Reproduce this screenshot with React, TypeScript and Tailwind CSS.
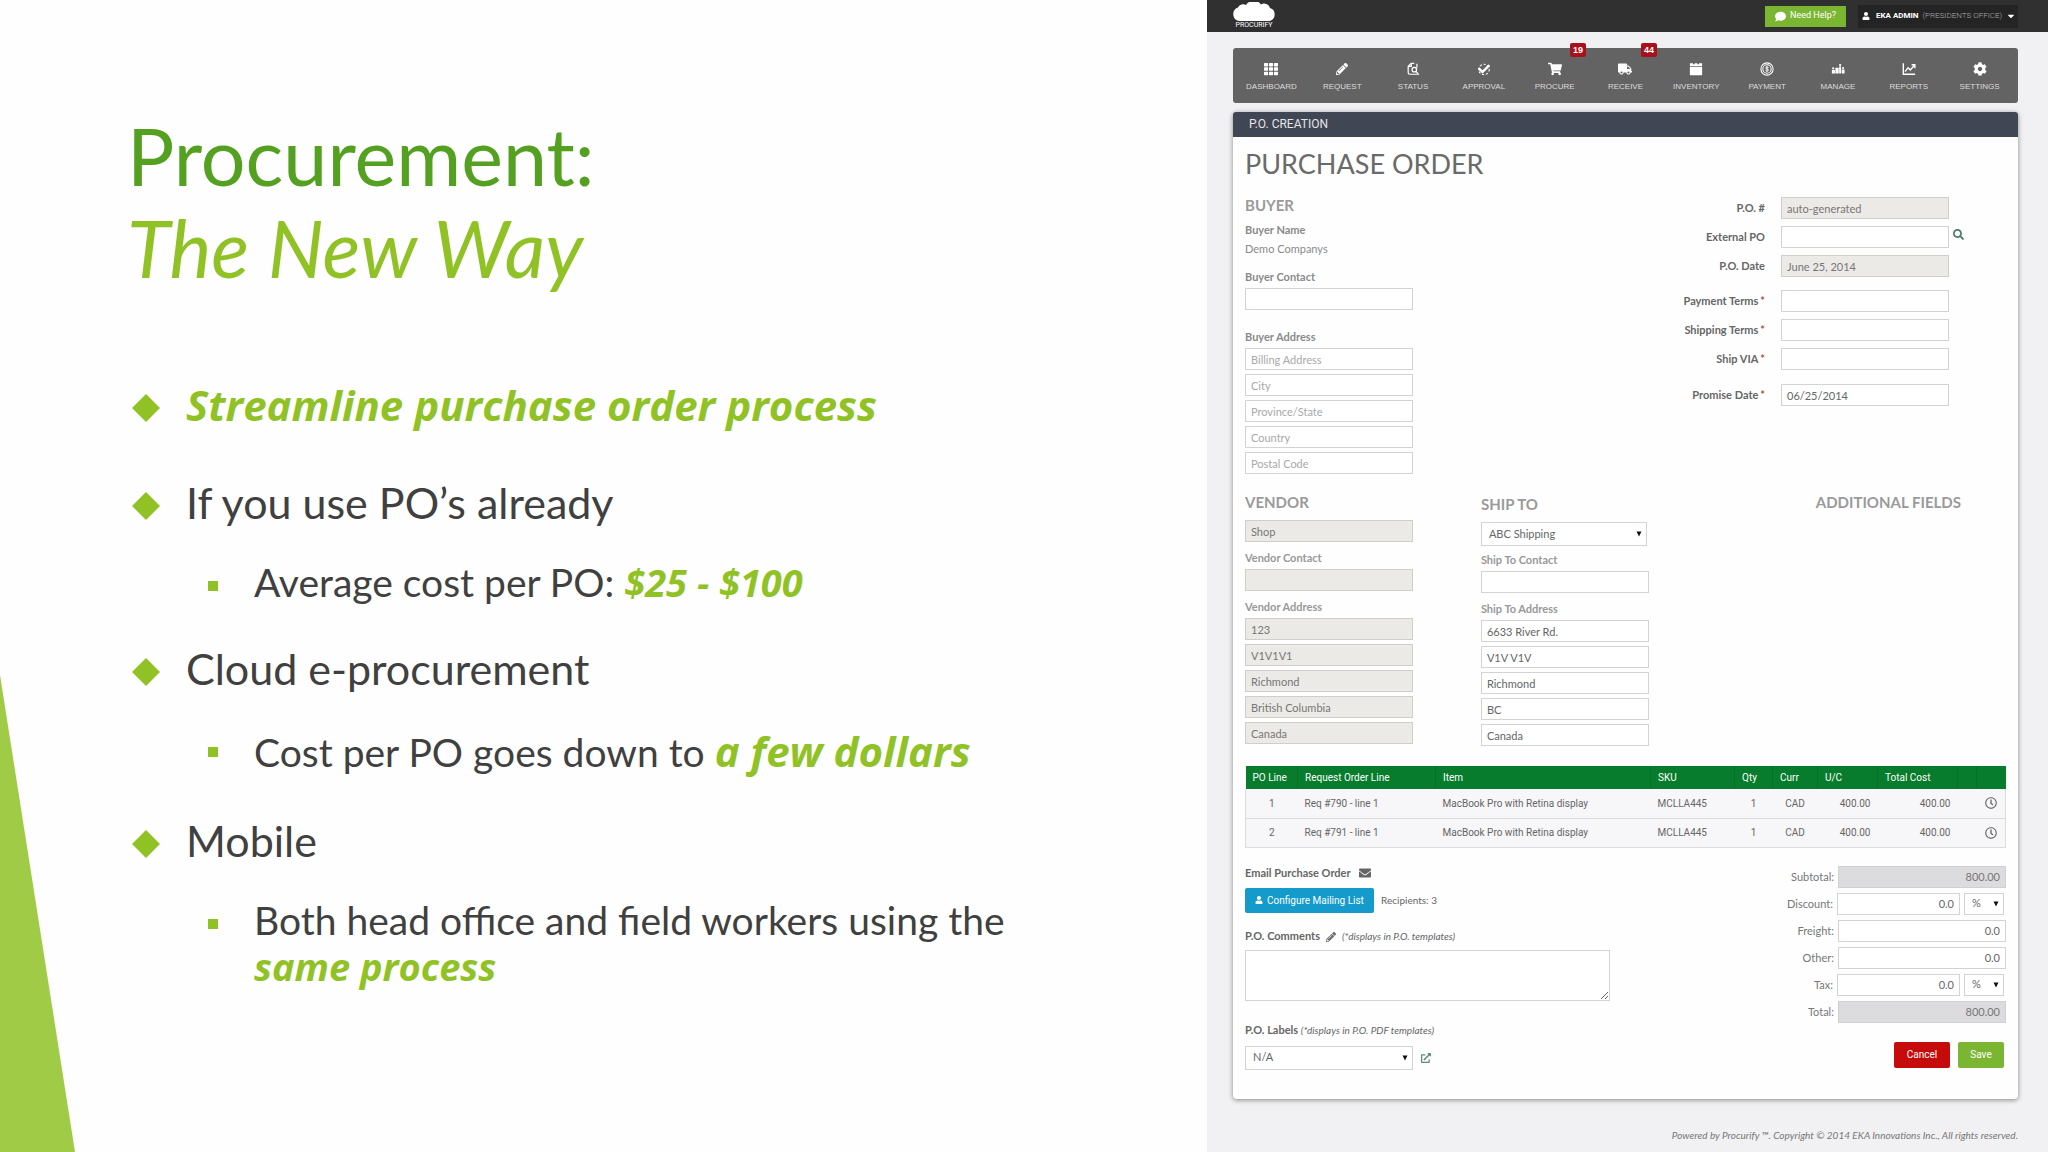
import React from 'react';
import {
  FaCheck,
  FaCog,
  FaComment,
  FaEnvelope,
  FaPencilAlt,
  FaSearch,
  FaShoppingCart,
  FaTh,
  FaTruck,
  FaUser,
  FaCaretDown,
  FaRegClock,
  FaExternalLinkAlt,
} from 'react-icons/fa';

const StatusIcon = () => (
  <svg viewBox="0 0 16 16" className="w-3.5 h-3.5" fill="none" stroke="currentColor" strokeWidth="1.4">
    <path d="M9.500 1.500H6L2.500 5v7a2 2 0 0 0 2 2H15" />
    <path d="M6 1.500V5H2.500M12.500 2v4.500" />
    <circle cx="9.500" cy="8.800" r="2.600" />
    <path d="M11.500 11l2.500 2.500" />
  </svg>
);

const ApprovalIcon = () => (
  <span className="relative flex w-3.5 h-3.5 items-center justify-center">
    <svg viewBox="0 0 16 16" className="absolute inset-0" fill="none" stroke="currentColor" strokeWidth="1.2">
      <circle cx="8" cy="8.5" r="6" strokeDasharray="2.5 2" />
    </svg>
    <FaCheck className="w-3 h-3" />
  </span>
);

const BoxIcon = () => (
  <svg viewBox="0 0 16 16" className="w-3.5 h-3.5" fill="currentColor">
    <path d="M1 1.500h3.500v1.200h2V1.500h3v1.200h2V1.500H15v3H1zM1 5.500h14V15H1z" />
  </svg>
);

const CoinIcon = () => (
  <svg viewBox="0 0 16 16" className="w-3.5 h-3.5" fill="none" stroke="currentColor">
    <circle cx="8" cy="8" r="7" strokeWidth="1.2" />
    <circle cx="8" cy="8" r="4.8" strokeWidth="1.2" />
    <path d="M9.8 6.3c-.8-.8-3.4-.8-3.4.5 0 1.4 3.4.8 3.4 2.3 0 1.3-2.6 1.4-3.6.4M8 4.5v7" strokeWidth="1" />
  </svg>
);

const ManageIcon = () => (
  <svg viewBox="0 0 16 16" className="w-3.5 h-3.5" fill="currentColor">
    <path d="M1 9h3.500v4H1zM5 6.500h3.800V13H5zM9.300 5h2.200v8H9.300zM12.300 8.500H15.500V13h-3.200z" />
    <circle cx="2.500" cy="7.300" r="1.200" />
    <circle cx="10.400" cy="3.500" r="1.300" />
    <circle cx="13.800" cy="6.800" r="1.200" />
  </svg>
);

const ReportsIcon = () => (
  <svg viewBox="0 0 16 16" className="w-3.5 h-3.5" fill="none" stroke="currentColor" strokeWidth="1.6">
    <path d="M1.500 1.500v12.500H15" />
    <path d="M3.500 11l3.500-4.500 2.500 2.500 5-5.500M11 3.200h3.700V7" />
  </svg>
);

const navItems = [
  { label: 'DASHBOARD', icon: <FaTh className="w-3.5 h-3.5" /> },
  { label: 'REQUEST', icon: <FaPencilAlt className="w-3 h-3" /> },
  { label: 'STATUS', icon: <StatusIcon /> },
  { label: 'APPROVAL', icon: <ApprovalIcon /> },
  { label: 'PROCURE', icon: <FaShoppingCart className="w-3.5 h-3.5" />, badge: '19' },
  { label: 'RECEIVE', icon: <FaTruck className="w-3.5 h-3.5" />, badge: '44' },
  { label: 'INVENTORY', icon: <BoxIcon /> },
  { label: 'PAYMENT', icon: <CoinIcon /> },
  { label: 'MANAGE', icon: <ManageIcon /> },
  { label: 'REPORTS', icon: <ReportsIcon /> },
  { label: 'SETTINGS', icon: <FaCog className="w-3.5 h-3.5" /> },
];

const inputBase = 'block h-[22px] border px-[5px] text-[11px] outline-none placeholder:text-[#a9a9a9]';
const editable = 'bg-white border-[#d4d2d6] text-[#666]';
const locked = 'bg-[#ebeae6] border-[#cfcec9] text-[#777]';

type BoxProps = { id: string; value?: string; placeholder?: string; readOnly?: boolean };

const Box: React.FC<BoxProps> = ({ id, value = '', placeholder, readOnly }) => (
  <input
    id={id}
    aria-label={placeholder || id}
    defaultValue={value}
    placeholder={placeholder}
    readOnly={readOnly}
    className={`${inputBase} w-[168px] ${readOnly ? locked : editable}`}
  />
);

const Label: React.FC<{ htmlFor?: string; className?: string; children: React.ReactNode }> = ({
  htmlFor,
  className = '',
  children,
}) => (
  <label htmlFor={htmlFor} className={`block text-[11px] leading-[18px] font-bold ${className}`}>
    {children}
  </label>
);

const Picker: React.FC<{ id: string; label?: string; options: string[]; className: string }> = ({
  id,
  label,
  options,
  className,
}) => (
  <div className={`relative ${className}`}>
    <select
      id={id}
      aria-label={label}
      className="block w-full h-full appearance-none border border-[#d4d2d6] bg-white pl-[7px] text-[11px] text-[#666] outline-none"
    >
      {options.map((o) => (
        <option key={o}>{o}</option>
      ))}
    </select>
    <svg viewBox="0 0 6 6" className="absolute right-[5px] top-1/2 -mt-[3px] w-1.5 h-1.5 pointer-events-none" fill="#111">
      <path d="M0.500 0.500h5L3 5.500z" />
    </svg>
  </div>
);

const SectionTitle: React.FC<{ children: React.ReactNode }> = ({ children }) => (
  <h2 className="text-[15px] leading-5 font-bold text-[#9a9a9a]">{children}</h2>
);

const Diamond = () => (
  <svg viewBox="0 0 28 28" className="w-7 h-7 shrink-0 mt-[15px] mr-[26px]" fill="#90c226">
    <path d="M14 0l14 14-14 14L0 14z" />
  </svg>
);

const PointText: React.FC<{ children: React.ReactNode }> = ({ children }) => (
  <div className="flex text-[43px] leading-[52px]">
    <Diamond />
    <p>{children}</p>
  </div>
);

const SubPoint: React.FC<{ children: React.ReactNode }> = ({ children }) => (
  <div className="flex mt-[30px] pl-[76px] text-[39px] leading-[46px]">
    <span className="w-2.5 h-2.5 mt-[22px] mr-9 shrink-0 bg-[#90c226]"></span>
    <p>{children}</p>
  </div>
);

const Accent: React.FC<{ large?: boolean; children: React.ReactNode }> = ({ large, children }) => (
  <strong
    className={`font-['Open_Sans',sans-serif] font-bold italic text-[#90c226] ${
      large ? 'text-[42px] leading-[52px]' : 'text-[38px] leading-[46px]'
    }`}
  >
    {children}
  </strong>
);

const Slide = () => (
  <section className="relative pl-[127px] pt-[110px] font-['Lato',sans-serif] text-[#404040]">
    <svg
      viewBox="0 0 75 477"
      preserveAspectRatio="none"
      className="absolute left-0 bottom-0 w-[75px] h-[477px]"
      fill="#a0cb46"
    >
      <path d="M0 0l75 477H0z" />
    </svg>
    <h1 className="text-[79px] leading-[92px] text-[#54a021]">
      Procurement:
      <br />
      <em className="text-[#90c226]">The New Way</em>
    </h1>
    <ul className="mt-[85px] ml-[5px]">
      <li>
        <PointText>
          <Accent large>Streamline purchase order process</Accent>
        </PointText>
      </li>
      <li className="mt-[46px]">
        <PointText>If you use PO’s already</PointText>
        <SubPoint>
          Average cost per PO: <Accent>$25 - $100</Accent>
        </SubPoint>
      </li>
      <li className="mt-[38px]">
        <PointText>Cloud e-procurement</PointText>
        <SubPoint>
          Cost per PO goes down to <Accent large>a few dollars</Accent>
        </SubPoint>
      </li>
      <li className="mt-[38px]">
        <PointText>Mobile</PointText>
        <SubPoint>
          Both head office and field workers using the
          <br />
          <Accent>same process</Accent>
        </SubPoint>
      </li>
    </ul>
  </section>
);

const TopBar = () => (
  <header className="flex h-8 items-center bg-[#303030] pl-[25px] pr-[30px] font-['Roboto',sans-serif]">
    <div className="flex flex-col items-center text-white">
      <svg viewBox="0 0 44 19" className="w-11 h-[19px]" fill="#fff">
        <path d="M7 19a7 7 0 0 1-1-13.500A6 6 0 0 1 14 3a9 9 0 0 1 15-.5 6 6 0 0 1 9 3.500A6.700 6.700 0 0 1 37 19z" />
      </svg>
      <span className="text-[7px] leading-[9px]">PROCURIFY</span>
    </div>
    <button className="ml-auto flex h-[21px] w-[81px] items-center justify-center gap-1 bg-[#7ab631] text-[9px] text-white">
      <FaComment className="w-[11px] h-[11px]" />
      Need Help?
    </button>
    <button className="ml-3 flex h-[23px] w-40 items-center gap-1 whitespace-nowrap bg-[#242424] px-1 text-[8px] font-bold text-white">
      <FaUser className="mr-0.5 w-2 h-2 shrink-0" />
      EKA ADMIN
      <span className="font-light text-[#aaa]">(PRESIDENTS OFFICE)</span>
      <FaCaretDown className="ml-auto mr-1 w-2.5 h-2.5 shrink-0" />
    </button>
  </header>
);

const NavBar = () => (
  <nav className="mt-4 grid h-[55px] grid-cols-11 rounded-[3px] bg-[#636363] px-[3px]">
    {navItems.map((item) => (
      <a
        key={item.label}
        href="#"
        className="relative flex flex-col items-center pt-3.5 font-['Liberation_Sans',sans-serif] text-[8px] leading-3 text-[#dcdcdc]"
      >
        <span className="mb-[5px] flex h-3.5 items-center text-white">{item.icon}</span>
        {item.label}
        {item.badge && (
          <span className="absolute right-1 -top-[5px] h-3.5 w-4 rounded-[2px] bg-[#a8111b] text-center text-[9px] font-bold leading-[14px] text-white">
            {item.badge}
          </span>
        )}
      </a>
    ))}
  </nav>
);

const HeaderRow: React.FC<{ label: string; id: string; required?: boolean; children: React.ReactNode }> = ({
  label,
  id,
  required,
  children,
}) => (
  <div className="flex h-[22px] items-center">
    <Label htmlFor={id} className="mr-4 flex-1 text-right text-[#666]">
      {label}
      {required && <span className="ml-0.5 text-[#b0554f]">*</span>}
    </Label>
    {children}
  </div>
);

const BuyerSection = () => (
  <div className="mt-[11px] flex justify-between">
    <div className="text-[#8a8a8a]">
      <SectionTitle>BUYER</SectionTitle>
      <Label className="mt-1.5">Buyer Name</Label>
      <p className="mt-px text-[11px] leading-[18px]">Demo Companys</p>
      <Label htmlFor="buyer-contact" className="mt-2.5 mb-0.5">Buyer Contact</Label>
      <Box id="buyer-contact" />
      <Label htmlFor="billing" className="mt-[18px] mb-0.5">Buyer Address</Label>
      <div className="flex flex-col gap-1">
        <Box id="billing" placeholder="Billing Address" />
        <Box id="buyer-city" placeholder="City" />
        <Box id="buyer-state" placeholder="Province/State" />
        <Box id="buyer-country" placeholder="Country" />
        <Box id="buyer-postal" placeholder="Postal Code" />
      </div>
    </div>
    <div className="mr-[57px] mt-0.5 flex flex-col gap-[7px]">
      <HeaderRow label="P.O. #" id="po-number">
        <Box id="po-number" value="auto-generated" readOnly />
      </HeaderRow>
      <HeaderRow label="External PO" id="external-po">
        <div className="relative">
          <Box id="external-po" />
          <button aria-label="Search" className="absolute left-[172px] top-[3px] text-[#4d7a6b]">
            <FaSearch className="w-[11px] h-[11px]" />
          </button>
        </div>
      </HeaderRow>
      <HeaderRow label="P.O. Date" id="po-date">
        <Box id="po-date" value="June 25, 2014" readOnly />
      </HeaderRow>
      <div className="mt-1.5 flex flex-col gap-[7px]">
        <HeaderRow label="Payment Terms" id="payment-terms" required>
          <Box id="payment-terms" />
        </HeaderRow>
        <HeaderRow label="Shipping Terms" id="shipping-terms" required>
          <Box id="shipping-terms" />
        </HeaderRow>
        <HeaderRow label="Ship VIA" id="ship-via" required>
          <Box id="ship-via" />
        </HeaderRow>
      </div>
      <div className="mt-[7px]">
        <HeaderRow label="Promise Date" id="promise-date" required>
          <Box id="promise-date" value="06/25/2014" />
        </HeaderRow>
      </div>
    </div>
  </div>
);

const vendorAddress = ['123', 'V1V1V1', 'Richmond', 'British Columbia', 'Canada'];
const shipAddress = ['6633 River Rd.', 'V1V V1V', 'Richmond', 'BC', 'Canada'];

const PartiesSection = () => (
  <div className="mt-[18px] grid grid-cols-[31%_44%_1fr] text-[#999]">
    <div>
      <SectionTitle>VENDOR</SectionTitle>
      <div className="mt-2">
        <Box id="vendor" value="Shop" readOnly />
      </div>
      <Label htmlFor="vendor-contact" className="mt-[7px] mb-0.5">Vendor Contact</Label>
      <Box id="vendor-contact" readOnly />
      <Label htmlFor="vendor-address-0" className="mt-[7px] mb-0.5">Vendor Address</Label>
      <div className="flex flex-col gap-1">
        {vendorAddress.map((v, i) => (
          <Box key={v} id={`vendor-address-${i}`} value={v} readOnly />
        ))}
      </div>
    </div>
    <div className="pt-0.5">
      <SectionTitle>SHIP TO</SectionTitle>
      <Picker id="ship-to" label="Ship to" options={['ABC Shipping']} className="mt-2 h-6 w-[166px]" />
      <Label htmlFor="ship-contact" className="mt-[5px] mb-0.5">Ship To Contact</Label>
      <Box id="ship-contact" />
      <Label htmlFor="ship-address-0" className="mt-[7px] mb-0.5">Ship To Address</Label>
      <div className="flex flex-col gap-1">
        {shipAddress.map((v, i) => (
          <Box key={v} id={`ship-address-${i}`} value={v} />
        ))}
      </div>
    </div>
    <SectionTitle>ADDITIONAL FIELDS</SectionTitle>
  </div>
);

const lines = [
  { no: 1, request: 'Req #790 - line 1' },
  { no: 2, request: 'Req #791 - line 1' },
];

const OrderTable = () => (
  <table className="mt-5 w-full table-fixed border-b border-[#cfcdd0] font-['Roboto',sans-serif] text-[10px] text-[#666]">
    <colgroup>
      <col className="w-[52px]" />
      <col className="w-[138px]" />
      <col />
      <col className="w-[84px]" />
      <col className="w-[38px]" />
      <col className="w-[45px]" />
      <col className="w-[60px]" />
      <col className="w-[80px]" />
      <col className="w-[19px]" />
      <col className="w-[29px]" />
    </colgroup>
    <thead>
      <tr className="h-[23px] bg-[#067c2c] text-left text-white">
        {['PO Line', 'Request Order Line', 'Item', 'SKU', 'Qty', 'Curr', 'U/C', 'Total Cost', '', ''].map((h, i) => (
          <th key={i} className="border-r border-[#05702a] px-[7px] font-normal last:border-r-0">
            {h}
          </th>
        ))}
      </tr>
    </thead>
    <tbody>
      {lines.map((line) => (
        <tr key={line.no} className="h-[29px] border-b border-x border-[#dddbde] bg-[#f7f6f8]">
          <td className="text-center">{line.no}</td>
          <td className="px-[7px]">{line.request}</td>
          <td className="px-[7px]">MacBook Pro with Retina display</td>
          <td className="px-[7px]">MCLLA445</td>
          <td className="text-center">1</td>
          <td className="text-center">CAD</td>
          <td className="px-[7px] text-right">400.00</td>
          <td className="px-[7px] text-right">400.00</td>
          <td></td>
          <td>
            <FaRegClock className="mx-auto w-3 h-3" />
          </td>
        </tr>
      ))}
    </tbody>
  </table>
);

const AmountRow: React.FC<{ label: string; value: string; total?: boolean; percent?: boolean }> = ({
  label,
  value,
  total,
  percent,
}) => (
  <div className="flex items-center justify-end">
    <label htmlFor={label} className="mr-1 text-[11px] leading-[22px] text-[#777]">
      {label}:
    </label>
    <input
      id={label}
      defaultValue={value}
      readOnly={total}
      className={`${inputBase} text-right ${percent ? 'w-[123px]' : 'w-[168px]'} ${
        total ? 'bg-[#dcdbdd] border-[#d0cfd1] text-[#777]' : editable
      }`}
    />
    {percent && <Picker id={`${label}-unit`} label={`${label} unit`} options={['%']} className="ml-1 mr-0.5 h-[22px] w-10" />}
  </div>
);

const BottomSection = () => (
  <div className="flex justify-between text-[#666]">
    <div className="mt-4">
      <h3 className="flex items-center gap-2 text-[11px] leading-[18px] font-bold">
        Email Purchase Order
        <FaEnvelope className="w-3 h-3" />
      </h3>
      <div className="mt-1.5 flex items-center">
        <button className="flex h-[25px] w-[129px] items-center justify-center gap-1 rounded-[2px] bg-[#149acb] font-['Roboto',sans-serif] text-[10px] text-white">
          <FaUser className="w-2 h-2" />
          Configure Mailing List
        </button>
        <span className="ml-[7px] text-[10px]">Recipients: 3</span>
      </div>
      <Label htmlFor="comments" className="mt-3.5">
        P.O. Comments
        <FaPencilAlt className="mx-1.5 inline w-2.5 h-2.5" />
        <em className="text-[10px] font-normal">(*displays in P.O. templates)</em>
      </Label>
      <textarea id="comments" className="mt-[5px] block h-[51px] w-[365px] border border-[#d4d2d6] bg-white outline-none"></textarea>
      <Label htmlFor="po-labels" className="mt-5">
        P.O. Labels <em className="text-[10px] font-normal">(*displays in P.O. PDF templates)</em>
      </Label>
      <div className="mt-[7px] flex items-center gap-2">
        <Picker id="po-labels" options={['N/A']} className="h-6 w-[168px]" />
        <a href="#" aria-label="Open labels" className="text-[#5d8a7e]">
          <FaExternalLinkAlt className="w-2.5 h-2.5" />
        </a>
      </div>
    </div>
    <div className="mt-[18px] flex flex-col gap-[5px]">
      <AmountRow label="Subtotal" value="800.00" total />
      <AmountRow label="Discount" value="0.0" percent />
      <AmountRow label="Freight" value="0.0" />
      <AmountRow label="Other" value="0.0" />
      <AmountRow label="Tax" value="0.0" percent />
      <AmountRow label="Total" value="800.00" total />
      <div className="mt-3.5 mr-0.5 flex justify-end gap-2 font-['Roboto',sans-serif] text-[10px] text-white">
        <button className="h-[26px] w-14 rounded-[2px] bg-[#c60b0b]">Cancel</button>
        <button className="h-[26px] w-[46px] rounded-[2px] bg-[#7ab631]">Save</button>
      </div>
    </div>
  </div>
);

const ProcurifyApp = () => (
  <section className="bg-[#f1f0f2] font-['Lato',sans-serif]">
    <TopBar />
    <div className="pl-[26px] pr-[30px]">
      <NavBar />
      <main className="mt-[9px] rounded-[4px] bg-[#fefefe] shadow-[0_1px_5px_rgba(0,0,0,0.45)]">
        <div className="h-[25px] rounded-t-[3px] bg-[#414654] pl-4 font-['Roboto',sans-serif] text-[12px] leading-[25px] text-[#e4e4e8]">
          P.O. CREATION
        </div>
        <form className="px-3 pt-[7px] pb-[29px]">
          <h1 className="text-[27px] leading-10 text-[#6a6a6a]">PURCHASE ORDER</h1>
          <BuyerSection />
          <PartiesSection />
          <OrderTable />
          <BottomSection />
        </form>
      </main>
      <footer className="mt-[27px] pb-2 text-right text-[10px] italic leading-[18px] text-[#777]">
        Powered by Procurify ™. Copyright © 2014 EKA Innovations Inc., All rights reserved.
      </footer>
    </div>
  </section>
);

const App: React.FC = () => {
  return (
    <div className="grid min-h-screen grid-cols-[1207fr_841fr] bg-[#fefefe]">
      <Slide />
      <ProcurifyApp />
    </div>
  );
};

export default App;
